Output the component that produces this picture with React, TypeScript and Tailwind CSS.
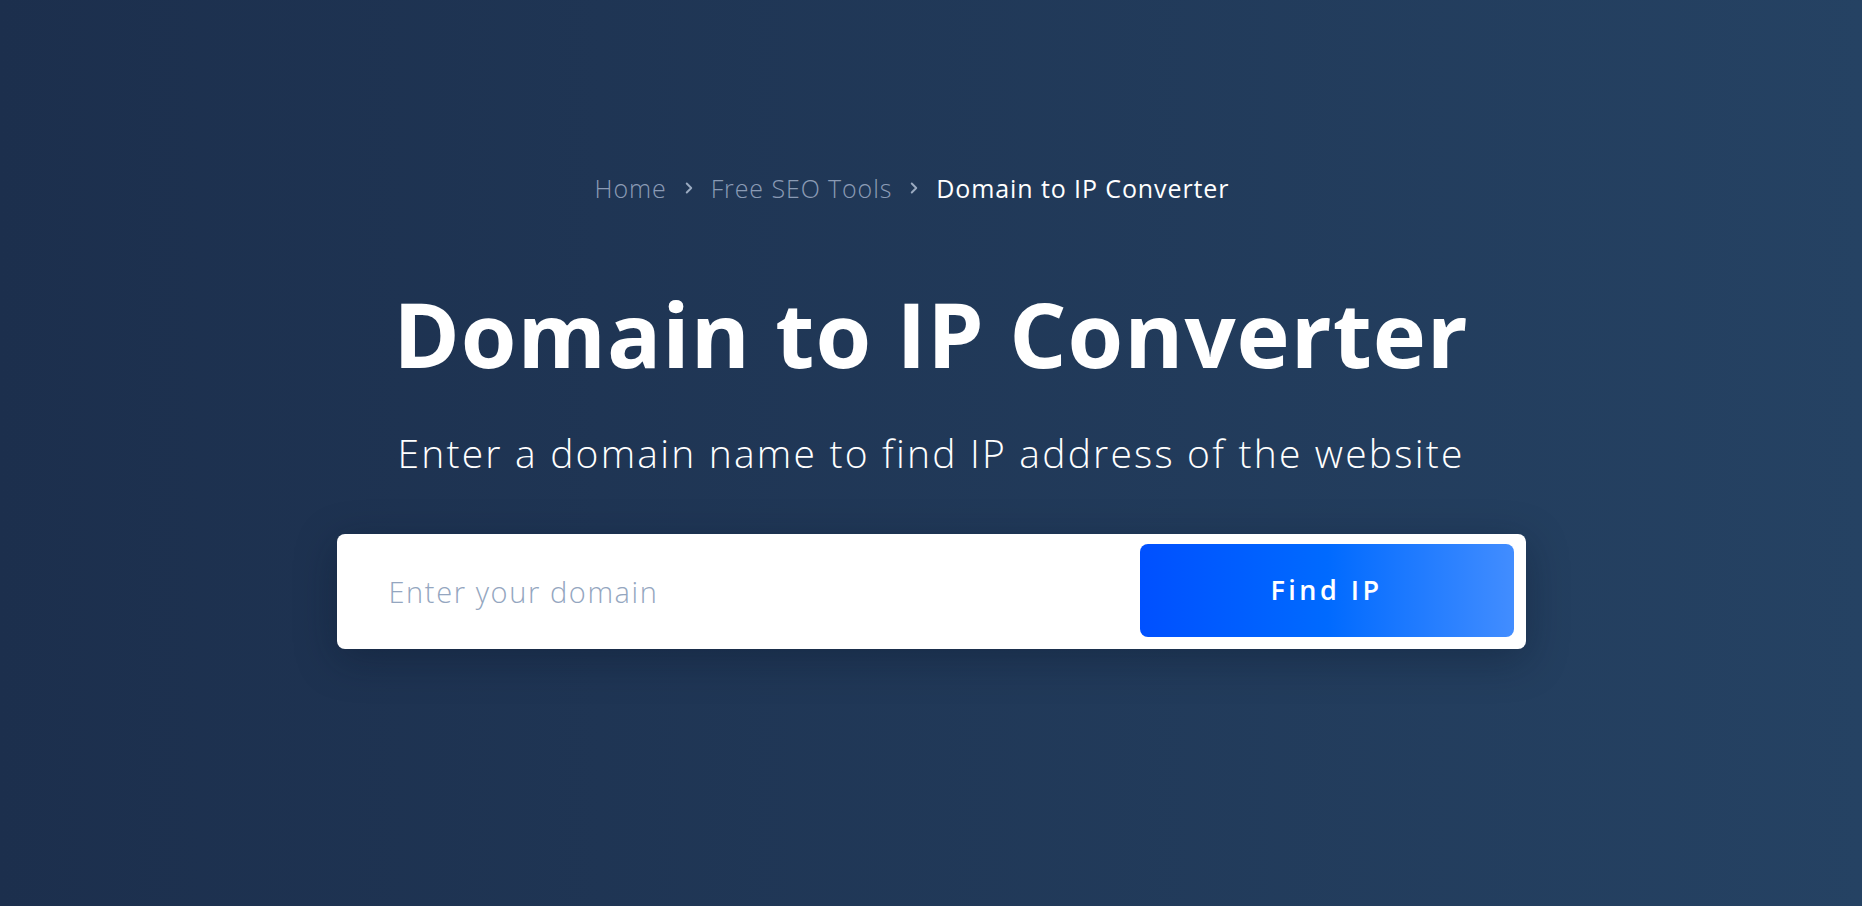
import React, { useState } from 'react';

function Chevron() {
  return (
    <svg width="18" height="18" viewBox="0 0 24 24" fill="none" stroke="currentColor" strokeWidth="2.6" strokeLinecap="round" strokeLinejoin="round" className="text-[#9aaac0]">
      <path d="M9 6l6 6-6 6" />
    </svg>
  );
}

export default function App() {
  const [domain, setDomain] = useState('');
  const font = { fontFamily: '"Open Sans", "Noto Sans", sans-serif' };

  return (
    <div style={font} className="w-full h-[906px] bg-gradient-to-r from-[#1c2f4d] to-[#254263] flex flex-col items-center">
      {/* breadcrumb */}
      <div className="mt-[174px] mr-[38px] flex items-center gap-[13px] text-[25px] leading-[28px] tracking-[0.9px]">
        <span className="text-[#8b9bb5] font-light">Home</span>
        <Chevron />
        <span className="text-[#8b9bb5] font-light">Free SEO Tools</span>
        <Chevron />
        <span className="text-white font-normal">Domain to IP Converter</span>
      </div>

      <h1 className="mt-[81px] text-white font-bold text-[90px] leading-[100px] tracking-[1px]">Domain to IP Converter</h1>

      <p className="mt-[48px] text-white font-light text-[39px] leading-[44px] tracking-[2.2px]">Enter a domain name to find IP address of the website</p>

      <div className="mt-[59px] w-[1189px] h-[115px] bg-white rounded-[8px] flex items-center pl-[52px] pr-[12px] shadow-[0_10px_40px_rgba(10,20,40,0.35)]">
        <input
          value={domain}
          onChange={e => setDomain(e.target.value)}
          placeholder="Enter your domain"
          style={font}
          className="flex-1 outline-none text-[29px] font-light tracking-[1.6px] text-[#1c2f4d] placeholder:text-[#94a6c0] bg-transparent"
        />
        <button className="w-[374px] h-[93px] rounded-[8px] bg-[linear-gradient(90deg,#0050ff_0%,#006aff_50%,#428dff_100%)] text-white text-[27px] font-semibold tracking-[3.5px] mb-[2px]">
          Find IP
        </button>
      </div>
    </div>
  );
}
